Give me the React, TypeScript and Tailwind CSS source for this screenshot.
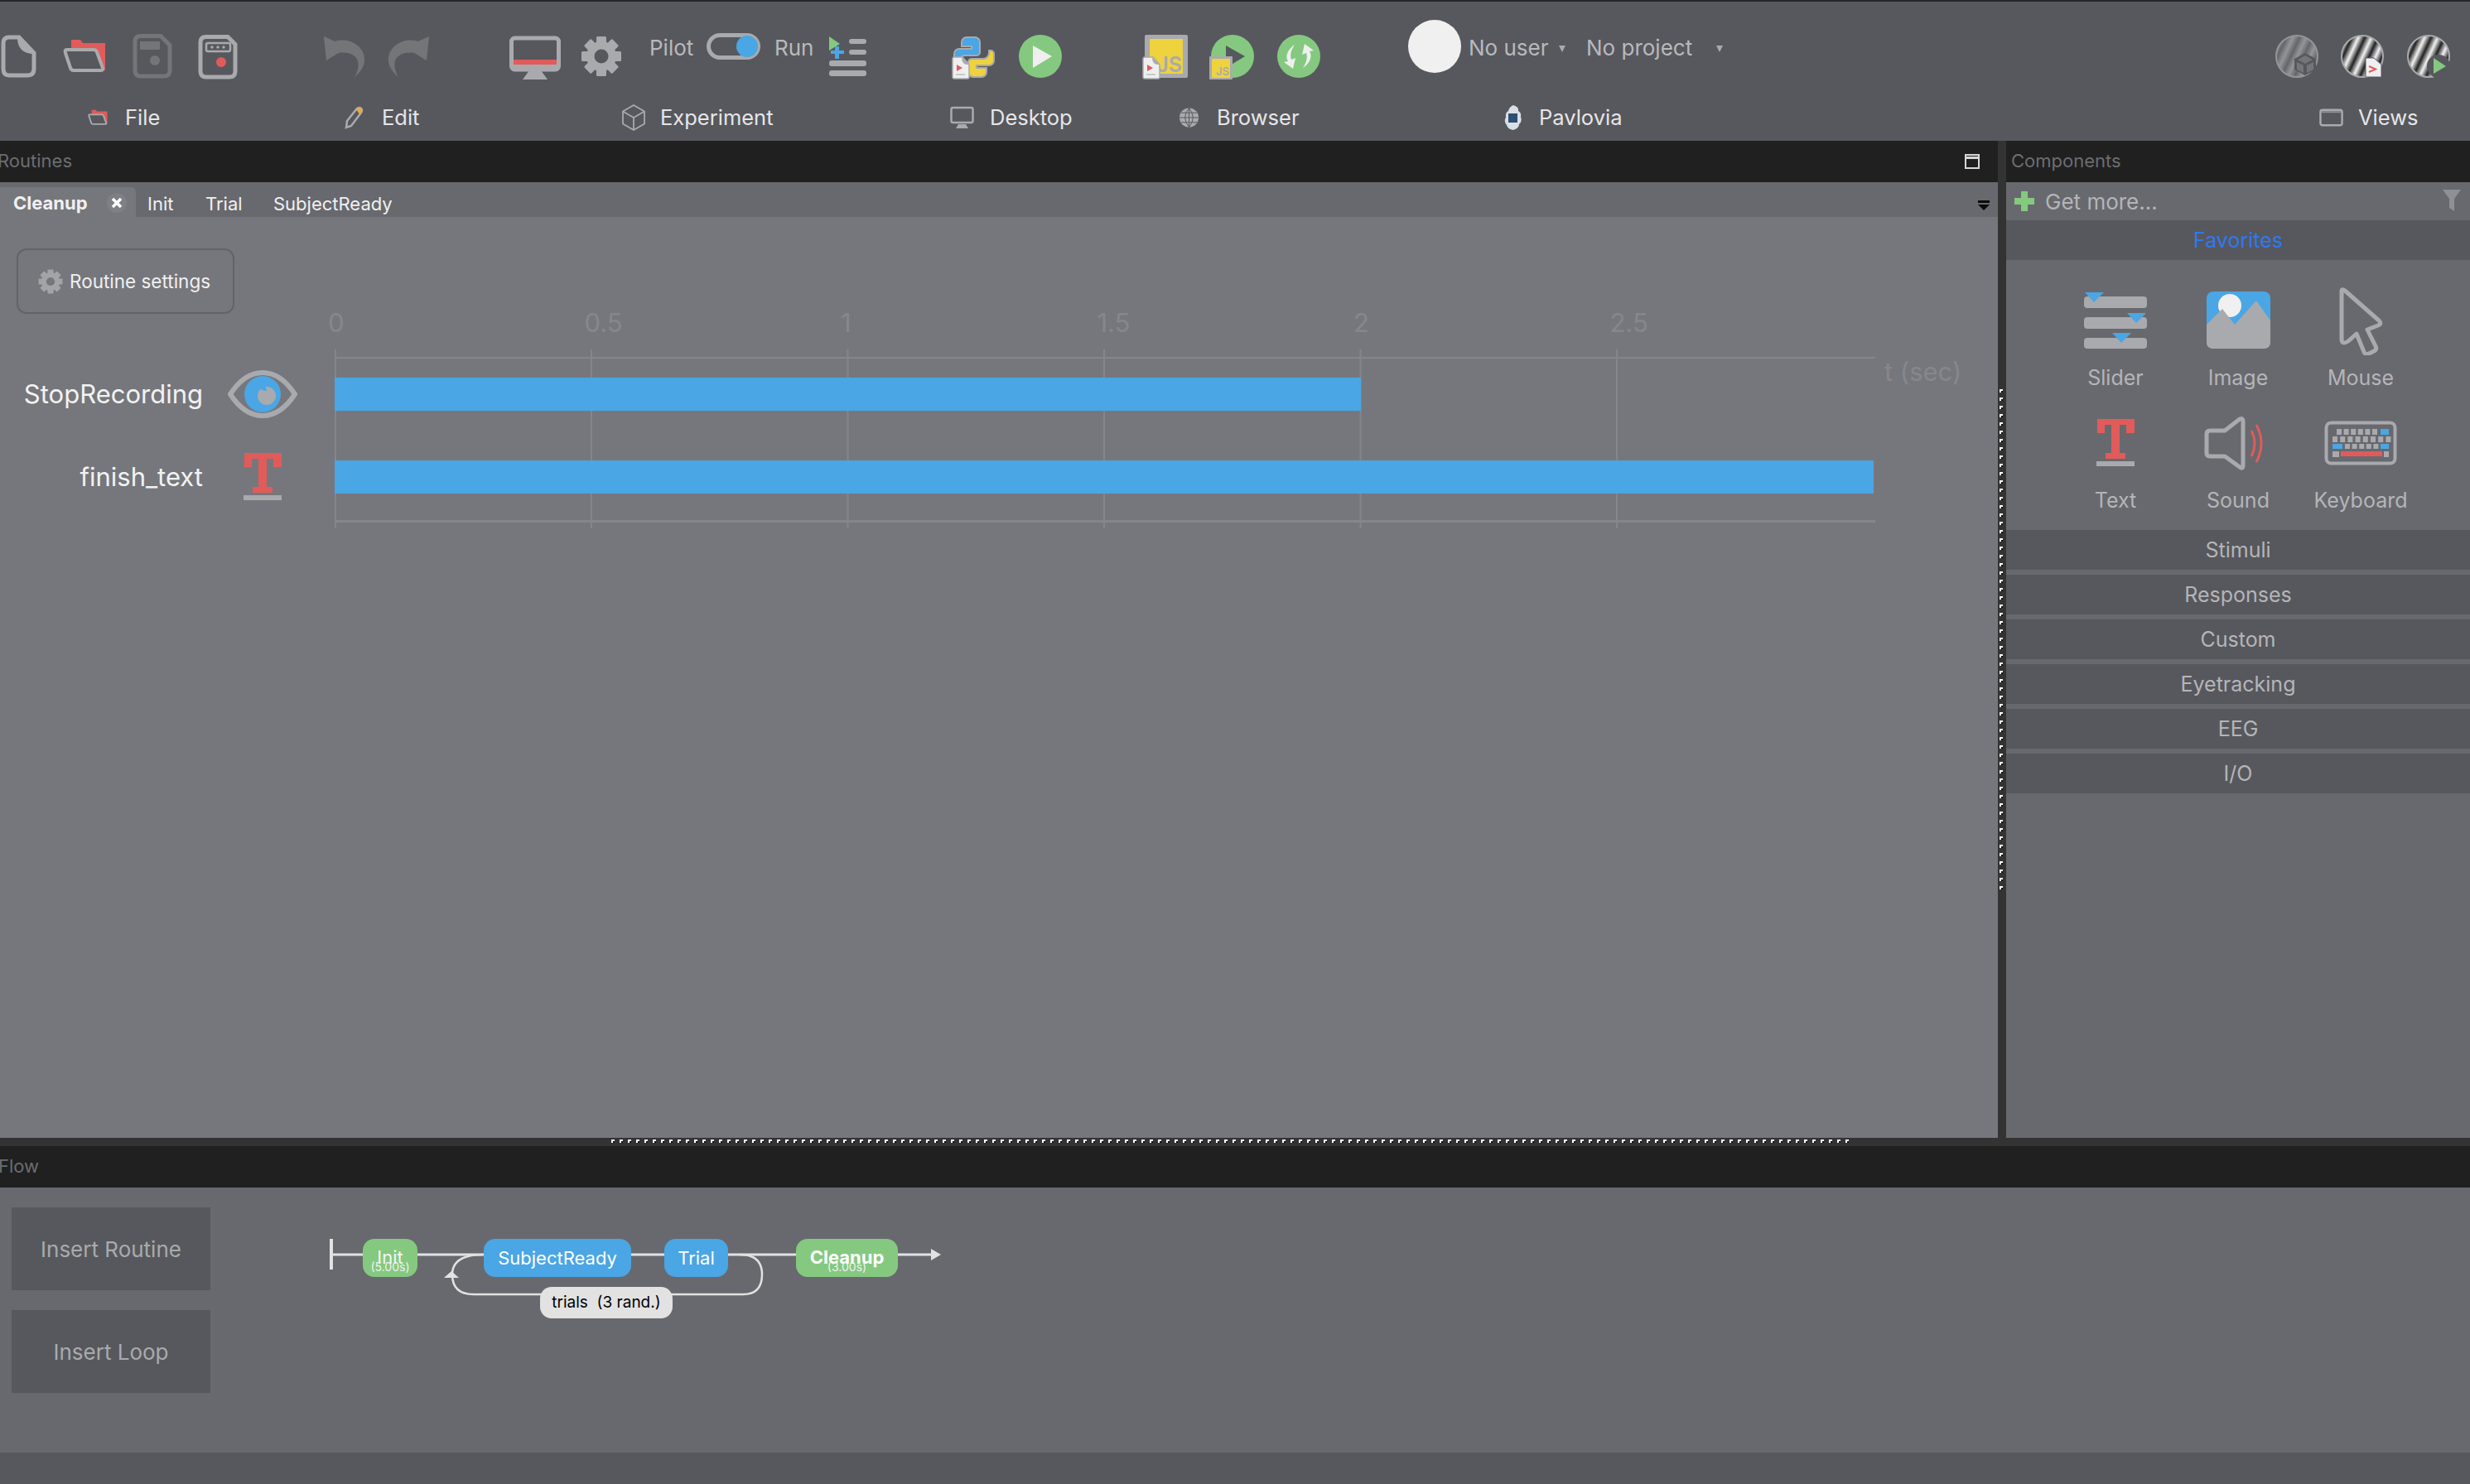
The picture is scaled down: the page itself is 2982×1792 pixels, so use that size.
const GRAY = "#a9aaad";
const DIM = "#747579";
const RED = "#e15b5b";
const BLUE = "#4aa6e4";
const GREEN = "#84c97f";
const YELLOW = "#eed23e";
const BAR = "#57585d";

function Gear({ className, color = GRAY, hole = BAR }: { className: string; color?: string; hole?: string }) {
  return (
    <svg viewBox="0 0 50 50" className={className}>
      {[0, 45, 90, 135].map((a) => (
        <rect key={a} x="19" y="1" width="12" height="48" rx="1.5" fill={color} transform={`rotate(${a} 25 25)`} />
      ))}
      <circle cx="25" cy="25" r="18" fill={color} />
      <circle cx="25" cy="25" r="8.5" fill={hole} />
    </svg>
  );
}

function Folder({ className }: { className: string }) {
  return (
    <svg viewBox="0 0 52 56" className={className}>
      <path d="M10 8h11l3 4h27v33h-7L10 20z" fill={RED} />
      <path d="M4 20h33q3 0 4 3l7 19q1 3-2 3H13q-3 0-4-3L3 24q-1-4 1-4z" fill={BAR} stroke={GRAY} strokeWidth="4" strokeLinejoin="round" />
    </svg>
  );
}

function TextT({ className }: { className: string }) {
  return (
    <svg viewBox="0 0 46 58" className={className}>
      <path d="M1 0h45v17H36V7H28v34h7v7H11v-7h7V7H10v10H1z" fill={RED} />
      <rect x="0" y="51" width="46" height="6" fill={GRAY} />
    </svg>
  );
}

function MiniDoc({ x, y }: { x: number; y: number }) {
  return (
    <g transform={`translate(${x} ${y})`}>
      <path d="M2 1h10l8 9v15q0 2-2 2H2q-2 0-2-2V3q0-2 2-2z" fill="#efeff0" stroke={GRAY} strokeWidth="1.5" />
      <path d="M11 1l9 9q-9 1-9-9z" fill={GRAY} />
      <path d="M5 10l7 4-7 4z" fill={RED} />
      <rect x="4" y="21" width="11" height="2" fill="#c9c9cb" />
    </g>
  );
}

function ToolbarIcons() {
  return (
    <div className="flex h-[120px] items-start pt-[38px]">
      <svg viewBox="0 0 46 56" className="h-[56px] w-[46px] shrink-0">
        <path d="M11 5h12l18 19v19q0 8-8 8H11q-7 0-7-8V12q0-7 7-7z" fill="none" stroke={GRAY} strokeWidth="5" />
        <path d="M21 5l20 20q-20 0-20-20z" fill={GRAY} />
      </svg>
      <Folder className="ml-[30px] h-[56px] w-[52px] shrink-0" />
      <svg viewBox="0 0 48 56" className="ml-[32px] h-[56px] w-[48px] shrink-0">
        <path d="M10 3.500h24l11 11V45q0 7-7 7H10q-7 0-7-7V10q0-6.500 7-6.500z" fill="none" stroke={DIM} strokeWidth="5" />
        <rect x="9" y="10" width="24" height="10" fill={DIM} />
        <circle cx="27" cy="33" r="6" fill={DIM} />
      </svg>
      <svg viewBox="0 0 48 56" className="ml-[31px] h-[56px] w-[48px] shrink-0">
        <path d="M10 4.500h26l9 9V46q0 7-7 7H10q-7 0-7-7V11q0-6.500 7-6.500z" fill="none" stroke={GRAY} strokeWidth="5" />
        <rect x="10" y="12" width="29" height="10" rx="2" fill="none" stroke={GRAY} strokeWidth="2.500" />
        <circle cx="17" cy="17" r="1.800" fill={GRAY} />
        <circle cx="24" cy="17" r="1.800" fill={GRAY} />
        <circle cx="31" cy="17" r="1.800" fill={GRAY} />
        <circle cx="28" cy="35" r="6" fill={RED} />
      </svg>
      <svg viewBox="0 0 52 56" className="ml-[103px] h-[56px] w-[52px] shrink-0">
        <path d="M1 4l3 29 26-16z" fill={DIM} />
        <path d="M14 10C40 2 66 30 38 53 48 36 42 21 18 24z" fill={DIM} />
      </svg>
      <svg viewBox="0 0 52 56" className="ml-[25px] h-[56px] w-[52px] shrink-0">
        <g transform="matrix(-1 0 0 1 52 0)">
          <path d="M1 4l3 29 26-16z" fill={DIM} />
          <path d="M14 10C40 2 66 30 38 53 48 36 42 21 18 24z" fill={DIM} />
        </g>
      </svg>
      <svg viewBox="0 0 62 56" className="ml-[96px] h-[56px] w-[62px] shrink-0">
        <rect x="2.500" y="6" width="57" height="38" rx="4" fill="none" stroke={GRAY} strokeWidth="5" />
        <rect x="5" y="32" width="52" height="6" fill={RED} />
        <rect x="5" y="38" width="52" height="5" fill={GRAY} />
        <path d="M24 45h14l8 11H16z" fill={GRAY} />
      </svg>
      <Gear className="ml-[24px] mt-[3px] h-[50px] w-[50px] shrink-0" />
      <span className="ml-[33px] h-[36px] w-[53px] shrink-0 text-[26px] leading-[36px] text-[#b8b9bc]">Pilot</span>
      <svg viewBox="0 0 65 32" className="ml-[16px] h-[32px] w-[65px] shrink-0">
        <rect x="2.500" y="2.500" width="60" height="27" rx="13.500" fill="none" stroke={GRAY} strokeWidth="5" />
        <circle cx="49" cy="16" r="13" fill={BLUE} />
      </svg>
      <span className="ml-[17px] h-[36px] w-[46px] shrink-0 text-[26px] leading-[36px] text-[#b8b9bc]">Run</span>
      <svg viewBox="0 0 46 56" className="ml-[19px] h-[56px] w-[46px] shrink-0">
        <rect x="25" y="7" width="21" height="6" rx="3" fill={GRAY} />
        <rect x="25" y="20" width="21" height="6" rx="3" fill={GRAY} />
        <rect x="1" y="33" width="45" height="7" rx="3" fill={GRAY} />
        <rect x="1" y="45" width="45" height="7" rx="3" fill={GRAY} />
        <path d="M1 4l13 9-13 8z" fill={GREEN} />
        <path d="M8 16h5v5h6v4h-6v6H8v-6H3v-4h5z" fill={BLUE} />
      </svg>
      <svg viewBox="0 0 55 56" className="ml-[103px] h-[56px] w-[55px] shrink-0">
        <g stroke={GRAY} strokeWidth="2">
          <path d="M18 5h10a6 6 0 0 1 6 6v12a4 4 0 0 1-4 4H16a7 7 0 0 0-7 7v3H7a4 4 0 0 1-4-4v-8a6 6 0 0 1 6-6h15v-3H12v-5a6 6 0 0 1 6-6z" fill={BLUE} />
          <path d="M18 5h10a6 6 0 0 1 6 6v12a4 4 0 0 1-4 4H16a7 7 0 0 0-7 7v3H7a4 4 0 0 1-4-4v-8a6 6 0 0 1 6-6h15v-3H12v-5a6 6 0 0 1 6-6z" fill={YELLOW} transform="rotate(180 27 29)" />
        </g>
        <MiniDoc x={1} y={28} />
      </svg>
      <svg viewBox="0 0 52 56" className="ml-[26px] h-[56px] w-[52px] shrink-0">
        <circle cx="26" cy="28" r="26" fill={GREEN} />
        <path d="M17 15l23 13-23 14z" fill="#efeff0" />
      </svg>
      <svg viewBox="0 0 56 56" className="ml-[97px] h-[56px] w-[56px] shrink-0">
        <rect x="3" y="2" width="52" height="52" rx="2" fill={GRAY} />
        <rect x="9" y="7" width="40" height="42" fill={YELLOW} />
        <text x="48" y="47" textAnchor="end" fontSize="25" fontWeight="600" fill={GRAY}>JS</text>
        <MiniDoc x={1} y={28} />
      </svg>
      <svg viewBox="0 0 54 56" className="ml-[25px] h-[56px] w-[54px] shrink-0">
        <circle cx="28" cy="28" r="26" fill={GREEN} />
        <path d="M20 15l23 13-23 14z" fill={BAR} />
        <rect x="0" y="28" width="28" height="28" rx="1" fill={GRAY} />
        <rect x="3" y="31" width="22" height="23" fill={YELLOW} />
        <text x="24" y="51" textAnchor="end" fontSize="13" fontWeight="600" fill={GRAY}>JS</text>
      </svg>
      <svg viewBox="0 0 52 56" className="ml-[28px] h-[56px] w-[52px] shrink-0">
        <circle cx="26" cy="28" r="26" fill={GREEN} />
        <path d="M21 14C13 19 9 28 13 34l-5 1 11 8 3-13-5 2c-2-6 0-12 4-18z" fill="#efeff0" />
        <path d="M21 14C13 19 9 28 13 34l-5 1 11 8 3-13-5 2c-2-6 0-12 4-18z" fill="#efeff0" transform="rotate(180 26 28)" />
      </svg>
      <div className="ml-[106px] -mt-[16px] h-[64px] w-[64px] shrink-0 rounded-full bg-[#f0f0f0]" />
      <span className="ml-[9px] h-[36px] w-[95px] shrink-0 whitespace-nowrap text-[26px] leading-[36px] text-[#b8b9bc]">No user</span>
      <svg viewBox="0 0 8 10" className="ml-[14px] mt-[14px] h-[10px] w-[8px] shrink-0">
        <path d="M0 1h8L4 9z" fill={GRAY} />
      </svg>
      <span className="ml-[25px] h-[36px] w-[128px] shrink-0 whitespace-nowrap text-[26px] leading-[36px] text-[#b8b9bc]">No project</span>
      <svg viewBox="0 0 8 10" className="ml-[29px] mt-[14px] h-[10px] w-[8px] shrink-0">
        <path d="M0 1h8L4 9z" fill={GRAY} />
      </svg>
      <div className="ml-auto flex pr-[24px]">
        <ViewIcon id="v1" faded className="h-[56px] w-[52px]" />
        <ViewIcon id="v2" className="ml-[27px] h-[56px] w-[52px]" />
        <ViewIcon id="v3" className="ml-[28px] h-[56px] w-[52px]" />
      </div>
    </div>
  );
}

function ViewIcon({ id, className, faded }: { id: string; className: string; faded?: boolean }) {
  return (
    <svg viewBox="0 0 52 56" className={className}>
      <defs>
        <linearGradient id={id} gradientUnits="userSpaceOnUse" x1="0" y1="0" x2="13" y2="6" spreadMethod="repeat">
          <stop offset="0" stopColor={faded ? "#6a6b6f" : "#222"} />
          <stop offset="0.5" stopColor={faded ? "#a9aaad" : "#f2f2f2"} />
          <stop offset="1" stopColor={faded ? "#6a6b6f" : "#222"} />
        </linearGradient>
      </defs>
      <circle cx="26" cy="28" r="25" fill={`url(#${id})`} stroke={GRAY} strokeWidth="2" opacity={faded ? 0.75 : 1} />
      {id === "v1" && (
        <g>
          <path d="M36 24l13 7v13l-13 7-13-7V31z" fill={BAR} />
          <path d="M36 27l9 5-9 5-9-5zM26 35l8 4v9l-8-4zM46 35l-8 4v9l8-4z" fill={DIM} />
        </g>
      )}
      {id === "v2" && (
        <g>
          <path d="M30 30h10l9 8v15H30z" fill="#efeff0" stroke={BAR} strokeWidth="1" />
          <path d="M34 40l8 3.500-8 3.500" fill="none" stroke={RED} strokeWidth="2" />
        </g>
      )}
      {id === "v3" && (
        <g>
          <circle cx="38" cy="40" r="14" fill={BAR} />
          <path d="M32 30l15 10-15 9z" fill={GREEN} />
        </g>
      )}
    </svg>
  );
}

function LabelItem({ width, gap, icon, children }: { width: string; gap: string; icon: React.ReactNode; children: string }) {
  return (
    <div className={`flex shrink-0 items-center ${width}`}>
      <div className={`flex shrink-0 items-center justify-center ${gap}`}>{icon}</div>
      <span className="text-[25.5px] leading-[40px] text-[#e6e6e7]">{children}</span>
    </div>
  );
}

function ToolbarLabels() {
  return (
    <div className="flex h-[40px] items-center pl-[106px]">
      <LabelItem width="w-[309px]" gap="w-[45px]" icon={<Folder className="mr-[21px] h-[28px] w-[24px]" />}>File</LabelItem>
      <LabelItem width="w-[335px]" gap="w-[46px]" icon={
        <svg viewBox="0 0 25 32" className="mr-[21px] h-[32px] w-[25px]">
          <path d="M4 20L16 5q3-2 5 0t0 5L9 26l-6 2z" fill="none" stroke={GRAY} strokeWidth="2.500" />
          <path d="M15 6q3-3 6-1t0 5l-2 2z" fill="#e9a93a" />
        </svg>
      }>Edit</LabelItem>
      <LabelItem width="w-[397px]" gap="w-[47px]" icon={
        <svg viewBox="0 0 30 32" className="mr-[17px] h-[32px] w-[30px]">
          <path d="M15 1l13 7.500v15L15 31 2 23.500v-15zM2 8.500L15 16l13-7.500M15 16v15" fill="none" stroke={GRAY} strokeWidth="1.800" />
        </svg>
      }>Experiment</LabelItem>
      <LabelItem width="w-[276px]" gap="w-[48px]" icon={
        <svg viewBox="0 0 29 32" className="mr-[19px] h-[32px] w-[29px]">
          <rect x="1.500" y="4" width="26" height="18" rx="2" fill="none" stroke={GRAY} strokeWidth="2.500" />
          <path d="M10 24h9l3 5H7z" fill={GRAY} />
        </svg>
      }>Desktop</LabelItem>
      <LabelItem width="w-[392px]" gap="w-[46px]" icon={
        <svg viewBox="0 0 26 32" className="mr-[21px] h-[32px] w-[25px]">
          <circle cx="13" cy="16" r="12" fill={GRAY} />
          <path d="M1 16h24M3 10h20M3 22h20M13 4v24M13 4q-10 12 0 24M13 4q10 12 0 24" fill="none" stroke={BAR} strokeWidth="1" />
        </svg>
      }>Browser</LabelItem>
      <LabelItem width="w-[985px]" gap="w-[43px]" icon={
        <svg viewBox="0 0 23 32" className="mr-[20px] h-[32px] w-[23px]">
          <path d="M12 1q7 2 6 7 4 2 3 7 2 6-2 9 0 5-7 7-7-1-8-6-4-5-1-9-1-6 3-8 1-5 6-7z" fill="#d9dfe6" />
          <rect x="6" y="11" width="11" height="11" fill="#2d4f77" />
        </svg>
      }>Pavlovia</LabelItem>
      <LabelItem width="w-[120px]" gap="w-[47px]" icon={
        <svg viewBox="0 0 30 22" className="mr-[18px] h-[22px] w-[29px]">
          <rect x="1.500" y="1.500" width="27" height="19" rx="2.500" fill="none" stroke={GRAY} strokeWidth="2.500" />
          <rect x="3" y="3" width="24" height="2" fill="#8f9095" />
        </svg>
      }>Views</LabelItem>
    </div>
  );
}

function PaneHeader({ children }: { children: React.ReactNode }) {
  return <div className="flex h-[50px] shrink-0 items-center bg-[#202020] pb-[1px] text-[22px] text-[#6c6d71]">{children}</div>;
}

function Timeline() {
  const ticks = ["0", "0.5", "1", "1.5", "2", "2.5"];
  return (
    <div className="min-h-0 flex-1 bg-[#76777c]">
      <div className="h-[110px] pl-[20px] pt-[38px]">
        <div className="flex h-[79px] w-[263px] items-center rounded-[12px] border-2 border-[#626368] pl-[24px]">
          <Gear className="h-[30px] w-[30px]" color="#a3a4a7" hole="#76777c" />
          <span className="ml-[8px] text-[22.5px] text-[#f0f0f0]">Routine settings</span>
        </div>
      </div>
      <div className="flex h-[36px] items-center pl-[396px]">
        {ticks.map((t) => (
          <span key={t} className="w-[309.5px] shrink-0 text-[31px] leading-[36px] text-[#86878c]">{t}</span>
        ))}
      </div>
      <div className="relative mt-[18px]">
        <svg viewBox="0 0 1862 216" className="absolute left-[404px] top-[-4px] h-[216px] w-[1862px]">
          <rect x="0" y="9" width="1860" height="2" fill="#85868b" />
          <rect x="0" y="206" width="1860" height="3" fill="#85868b" />
          {[0, 309, 618.5, 928, 1237.5, 1547].map((x) => (
            <rect key={x} x={x} y="0" width="2" height="216" fill="#85868b" />
          ))}
        </svg>
        <span className="absolute left-[2275px] top-[5px] text-[31px] leading-[36px] text-[#86878c]">t (sec)</span>
        <div className="relative flex h-[100px] items-center">
          <span className="w-[245px] shrink-0 text-right text-[31px] text-[#f2f2f2]">StopRecording</span>
          <div className="ml-[26px] flex w-[92px] shrink-0 justify-center">
            <svg viewBox="0 0 84 58" className="h-[58px] w-[84px]">
              <path d="M3 29Q20 3 42 3t39 26Q64 55 42 55T3 29z" fill="none" stroke={GRAY} strokeWidth="6" strokeLinejoin="round" />
              <circle cx="42" cy="29" r="22" fill={BLUE} />
              <circle cx="47" cy="31" r="11" fill={GRAY} />
              <path d="M38 20q9-3 9 5-7 0-9-5z" fill={BLUE} />
            </svg>
          </div>
          <div className="ml-[41px] h-[40px] w-[1239px] shrink-0 bg-[#4aa6e4]" />
        </div>
        <div className="relative flex h-[100px] items-center">
          <span className="w-[245px] shrink-0 text-right text-[31px] text-[#f2f2f2]">finish_text</span>
          <div className="ml-[26px] flex w-[92px] shrink-0 justify-center">
            <TextT className="h-[58px] w-[48px]" />
          </div>
          <div className="ml-[41px] h-[40px] w-[1858px] shrink-0 bg-[#4aa6e4]" />
        </div>
      </div>
    </div>
  );
}

function Routines() {
  return (
    <div className="flex w-[2412px] shrink-0 flex-col">
      <PaneHeader>
        <span className="-ml-[3px]">Routines</span>
        <svg viewBox="0 0 18 18" className="ml-auto mr-[22px] h-[18px] w-[18px]">
          <rect x="1" y="1" width="16" height="16" fill="none" stroke="#d8d8d8" strokeWidth="2" />
          <rect x="1" y="3" width="16" height="3" fill="#d8d8d8" />
        </svg>
      </PaneHeader>
      <div className="flex h-[42px] shrink-0 items-end bg-[#68696e] text-[22px] text-[#f0f0f0]">
        <div className="flex h-[36px] w-[164px] items-center rounded-tr-[6px] bg-[#76777c] pl-[16px] pt-[2px]">
          <span className="font-bold">Cleanup</span>
          <span className="ml-[23px] flex h-[24px] w-[24px] items-center justify-center rounded-full bg-[#7f8085]">
            <svg viewBox="0 0 14 14" className="h-[14px] w-[14px]">
              <path d="M2 2l10 10M12 2L2 12" stroke="#fff" strokeWidth="3.500" />
            </svg>
          </span>
        </div>
        <span className="ml-[14px] h-[36px] w-[70px] pt-[2px] leading-[36px]">Init</span>
        <span className="h-[36px] w-[82px] pt-[2px] leading-[36px]">Trial</span>
        <span className="h-[36px] pt-[2px] leading-[36px]">SubjectReady</span>
        <svg viewBox="0 0 14 12" className="ml-auto mb-[8px] mr-[10px] h-[12px] w-[14px]">
          <rect x="0" y="0" width="14" height="3" fill="#0b0b0b" />
          <path d="M0 5h14l-7 7z" fill="#0b0b0b" />
        </svg>
      </div>
      <Timeline />
    </div>
  );
}

function SliderIcon() {
  return (
    <svg viewBox="0 0 76 68" className="h-[68px] w-[76px]">
      <rect x="0" y="5" width="76" height="14" rx="4" fill={GRAY} />
      <rect x="0" y="30" width="76" height="14" rx="4" fill={GRAY} />
      <rect x="0" y="55" width="76" height="13" rx="4" fill={GRAY} />
      <path d="M1 0h23L12 12z" fill={BLUE} />
      <path d="M52 25h23L63 37z" fill={BLUE} />
      <path d="M34 49h23L45 61z" fill={BLUE} />
    </svg>
  );
}

function ImageIcon() {
  return (
    <svg viewBox="0 0 77 70" className="h-[70px] w-[77px]">
      <rect x="0" y="0" width="77" height="69" rx="8" fill={BLUE} />
      <circle cx="28" cy="17" r="14" fill="#f0f0f0" />
      <path d="M0 40L19 21l15 19L60 11l17 24v26q0 8-8 8H8q-8 0-8-8z" fill={GRAY} />
    </svg>
  );
}

function MouseIcon() {
  return (
    <svg viewBox="0 0 56 84" className="h-[84px] w-[56px]">
      <path d="M5 7q0-4 4-1l41 36q4 4-1 6l-13 5 10 20q2 4-2 6l-6 3q-4 2-6-2L23 58l-10 9q-8 5-8-3z" fill="none" stroke={GRAY} strokeWidth="5" strokeLinejoin="round" />
    </svg>
  );
}

function SoundIcon() {
  return (
    <svg viewBox="0 0 76 68" className="-ml-[8px] h-[68px] w-[76px]">
      <path d="M8 19H26L44 5Q48 3 48 8V61Q48 66 44 63L26 50H8Q4 50 4 46V23Q4 19 8 19Z" fill="none" stroke={GRAY} strokeWidth="5" strokeLinejoin="round" />
      <path d="M58 19Q66 34 58 50M64 12Q76 34 64 57" fill="none" stroke={RED} strokeWidth="3" />
    </svg>
  );
}

function KeyboardIcon() {
  return (
    <svg viewBox="0 0 88 54" className="h-[54px] w-[88px]">
      <rect x="2.500" y="2.500" width="83" height="49" rx="6" fill="none" stroke={GRAY} strokeWidth="4" />
      {[0, 1, 2, 3, 4, 5].map((i) => (
        <rect key={`a${i}`} x={15 + i * 8.6} y="10" width="6" height="7" fill={GRAY} />
      ))}
      <rect x="68" y="10" width="10" height="7" fill={BLUE} />
      {[0, 1, 2, 3, 4, 5, 6, 7].map((i) => (
        <rect key={`b${i}`} x={10 + i * 9.2} y="19" width="6" height="7" fill={GRAY} />
      ))}
      <rect x="10" y="28" width="12" height="6" fill={BLUE} />
      {[0, 1, 2, 3, 4].map((i) => (
        <rect key={`c${i}`} x={25 + i * 8.6} y="28" width="6" height="6" fill={GRAY} />
      ))}
      <rect x="68" y="28" width="10" height="6" fill={BLUE} />
      <rect x="10" y="37" width="8" height="7" fill={GRAY} />
      <rect x="20" y="37" width="50" height="6" fill={RED} />
      <rect x="72" y="37" width="6" height="7" fill={GRAY} />
    </svg>
  );
}

function ComponentsPanel() {
  const favorites: [string, React.ReactNode][] = [
    ["Slider", <SliderIcon />],
    ["Image", <ImageIcon />],
    ["Mouse", <MouseIcon />],
    ["Text", <TextT className="h-[58px] w-[46px]" />],
    ["Sound", <SoundIcon />],
    ["Keyboard", <KeyboardIcon />],
  ];
  const sections = ["Stimuli", "Responses", "Custom", "Eyetracking", "EEG", "I/O"];
  return (
    <div className="flex min-w-0 flex-1 flex-col">
      <PaneHeader>
        <span className="ml-[6px]">Components</span>
      </PaneHeader>
      <div className="flex min-h-0 flex-1 flex-col bg-[#68696e]">
        <div className="flex h-[46px] shrink-0 items-center pl-[10px] pr-[11px]">
          <svg viewBox="0 0 24 24" className="h-[24px] w-[24px]">
            <path d="M8 0h8v8h8v8h-8v8H8v-8H0V8h8z" fill={GREEN} />
          </svg>
          <span className="ml-[13px] pt-[1px] text-[26px] text-[#b4b5b8]">Get more...</span>
          <svg viewBox="0 0 22 26" className="ml-auto -mt-[2px] h-[26px] w-[22px]">
            <path d="M0 0h22l-8 11v15l-6-4V11z" fill="#8f9095" />
          </svg>
        </div>
        <div className="flex h-[48px] shrink-0 items-center justify-center bg-[#57585d] pt-[2px] text-[25px] text-[#2e78f2]">Favorites</div>
        <div className="grid h-[326px] shrink-0 auto-rows-[148px] grid-cols-[repeat(3,148px)] justify-center pt-[25px]">
          {favorites.map(([name, icon]) => (
            <div key={name} className="flex flex-col items-center">
              <div className="flex h-[96px] w-full items-center justify-center">{icon}</div>
              <span className="mt-[3px] text-[25px] leading-[36px] text-[#b4b5b8]">{name}</span>
            </div>
          ))}
        </div>
        <div className="flex flex-col gap-[6px]">
          {sections.map((s) => (
            <div key={s} className="flex h-[48px] items-center justify-center bg-[#57585d] pt-[2px] text-[25px] text-[#b4b5b8]">{s}</div>
          ))}
        </div>
      </div>
    </div>
  );
}

function FlowDiagram() {
  return (
    <>
      <svg viewBox="0 0 1200 200" className="absolute left-0 top-0 h-[200px] w-[1200px]">
        <rect x="398" y="62" width="4" height="37" fill="#e2e2e2" />
        <rect x="402" y="79.500" width="724" height="3" fill="#e2e2e2" />
        <path d="M1124 74l12 7-12 7z" fill="#e2e2e2" />
        <path d="M893 81Q920 81 920 105Q920 129 897 129H572Q546 129 546 105Q546 81 584 81" fill="none" stroke="#e2e2e2" strokeWidth="2.500" />
        <path d="M545 101l9 8h-18z" fill="#e2e2e2" />
      </svg>
      <div className="absolute left-[438px] top-[62px] h-[46px] w-[66px] rounded-[14px] bg-[#84c97f] pt-[7px] text-center text-[22px] leading-[30px] text-[#f5f5f5]">
        Init
        <span className="absolute inset-x-0 top-[23px] text-[14px] leading-[22px] text-[#f0f0f0]">(5.00s)</span>
      </div>
      <div className="absolute left-[584px] top-[62px] flex h-[46px] w-[178px] items-center justify-center rounded-[14px] bg-[#4aa6e4] text-[22px] text-white">SubjectReady</div>
      <div className="absolute left-[802px] top-[62px] flex h-[46px] w-[77px] items-center justify-center rounded-[14px] bg-[#4aa6e4] text-[22px] text-white">Trial</div>
      <div className="absolute left-[961px] top-[62px] h-[46px] w-[123px] rounded-[14px] bg-[#84c97f] pt-[7px] text-center text-[22px] font-bold leading-[30px] text-white">
        Cleanup
        <span className="absolute inset-x-0 top-[23px] text-[14px] font-normal leading-[22px] text-[#f0f0f0]">(3.00s)</span>
      </div>
      <div className="absolute left-[652px] top-[120px] flex h-[38px] w-[160px] items-center justify-center whitespace-pre rounded-[14px] bg-[#e2e2e2] text-[19px] text-black">trials  (3 rand.)</div>
    </>
  );
}

export default function App() {
  return (
    <div className="flex h-[1792px] w-[2982px] flex-col overflow-hidden bg-[#57585d] [font-family:Inter,sans-serif]">
      <div className="relative h-[170px] shrink-0 border-t-2 border-[#26262a] bg-[#57585d]">
        <ToolbarIcons />
        <ToolbarLabels />
      </div>

      <div className="relative flex h-[1204px] shrink-0">
        <Routines />
        <div className="relative w-[10px] shrink-0 bg-[#333333]">
          <svg className="absolute left-[2px] top-[300px] h-[605px] w-[4px]">
            <defs>
              <pattern id="sash-v" width="4" height="10" patternUnits="userSpaceOnUse">
                <rect width="4" height="4" fill="#fff" />
                <rect x="2" y="2" width="2" height="2" fill="#111" />
              </pattern>
            </defs>
            <rect width="4" height="605" fill="url(#sash-v)" />
          </svg>
        </div>
        <ComponentsPanel />
      </div>

      <div className="relative h-[10px] shrink-0 bg-[#333333]">
        <svg className="absolute left-[738px] top-[2px] h-[4px] w-[1494px]">
          <defs>
            <pattern id="sash-h" width="10" height="4" patternUnits="userSpaceOnUse">
              <rect width="4" height="4" fill="#fff" />
              <rect x="2" y="2" width="2" height="2" fill="#111" />
            </pattern>
          </defs>
          <rect width="1494" height="4" fill="url(#sash-h)" />
        </svg>
      </div>

      <PaneHeader>
        <span className="-ml-[2px]">Flow</span>
      </PaneHeader>
      <div className="relative flex h-[320px] shrink-0 flex-col gap-[24px] bg-[#68696e] pl-[14px] pt-[24px]">
        <FlowDiagram />
        <div className="flex h-[100px] w-[240px] items-center justify-center bg-[#57585d] text-[26px] text-[#a9aaad]">Insert Routine</div>
        <div className="flex h-[100px] w-[240px] items-center justify-center bg-[#57585d] text-[26px] text-[#a9aaad]">Insert Loop</div>
      </div>
      <div className="flex-1 bg-[#57585d]" />
    </div>
  );
}
